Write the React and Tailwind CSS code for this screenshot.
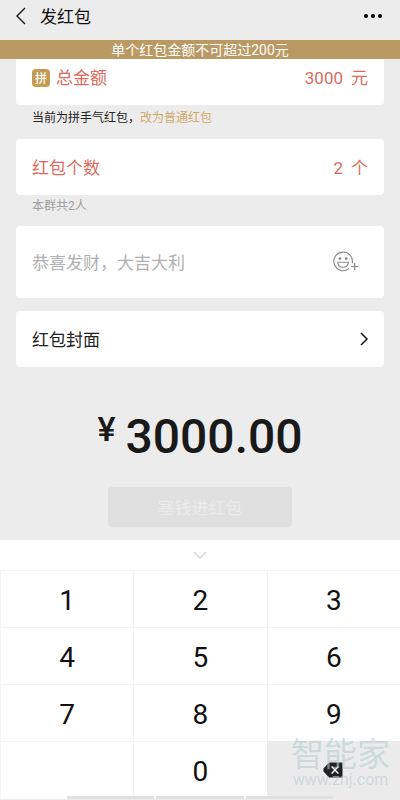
import { useState } from "react";

const CJK = "font-['Roboto','Noto_Sans_CJK_SC',sans-serif]";
const KEYS = ["1", "2", "3", "4", "5", "6", "7", "8", "9"];

const keyClass =
  "flex h-[57px] items-center justify-center border-t border-l border-[#f3f3f3] pt-1 text-[28px] leading-8 text-[#111]";

function BackIcon() {
  return (
    <svg width="12" height="18" viewBox="0 0 12 18" fill="none" stroke="#222" strokeWidth="1.5">
      <path d="M9 1 L1 9 L9 17" />
    </svg>
  );
}

function EmojiAddIcon() {
  return (
    <svg width="26" height="22" viewBox="0 0 26 22" fill="none" stroke="#888" strokeWidth="1.1">
      <path d="M16.2 17.4 A9.3 9.3 0 1 1 19.2 12.4" />
      <circle cx="7" cy="7.6" r="1.4" fill="#888" stroke="none" />
      <circle cx="13.2" cy="7.6" r="1.4" fill="#888" stroke="none" />
      <path d="M4.8 11.3 H15.4 C15.2 14.6 12.8 16.3 10.1 16.3 C7.4 16.3 5 14.6 4.8 11.3 Z" />
      <path d="M18 15.5 H25.4 M21.7 11.8 V19.2" strokeWidth="1.2" />
    </svg>
  );
}

function DeleteIcon() {
  return (
    <svg width="20" height="16" viewBox="0 0 20 16">
      <path d="M6 0.5 H19.5 V15.5 H6 L0.5 9.5 V6.5 Z" fill="#222" />
      <path d="M8.6 4.6 L15.4 11.4 M15.4 4.6 L8.6 11.4" stroke="#fff" strokeWidth="1.4" />
    </svg>
  );
}

function NumberRow({ id, label, unit, badge, value, onChange }) {
  return (
    <>
      <label htmlFor={id} className="flex shrink-0 items-center gap-[6px] text-[17px] leading-6 text-[#db6b5c]">
        {badge && (
          <span className="flex h-[18px] w-[18px] items-center justify-center rounded-sm bg-[#c39b52] pt-[2px] text-[12px] leading-4 font-medium text-white">
            {badge}
          </span>
        )}
        {label}
      </label>
      <div className="flex min-w-0 flex-1 items-center gap-2 text-[17px] leading-6 text-[#db6b5c]">
        <input
          id={id}
          inputMode="decimal"
          value={value}
          onChange={(e) => onChange(e.target.value)}
          className="min-w-0 flex-1 bg-transparent text-right outline-none"
        />
        <span>{unit}</span>
      </div>
    </>
  );
}

export default function App() {
  const [total, setTotal] = useState("3000");
  const [count, setCount] = useState("2");
  const [wish, setWish] = useState("");

  return (
    <div className={`min-h-screen overflow-hidden bg-[#ececec] ${CJK}`}>
      <header className="flex h-10 items-center justify-between px-4 pb-2">
        <div className="flex items-center gap-3">
          <button type="button" aria-label="返回">
            <BackIcon />
          </button>
          <h1 className="pt-[2px] text-[17px] leading-6 text-[#111]">发红包</h1>
        </div>
        <button type="button" aria-label="更多" className="flex gap-[3px] pr-[2px]">
          <span className="h-1 w-1 rounded-full bg-black" />
          <span className="h-1 w-1 rounded-full bg-black" />
          <span className="h-1 w-1 rounded-full bg-black" />
        </button>
      </header>

      <div className="h-[19px] bg-[#ba9963] pt-[2px] text-center text-[14px] leading-[17px] text-white">
        单个红包金额不可超过200元
      </div>

      <main className="px-4">
        <div className="flex h-[46px] items-center rounded-b bg-white px-4 pb-2">
          <NumberRow id="total" label="总金额" unit="元" badge="拼" value={total} onChange={setTotal} />
        </div>
        <p className="h-[34px] px-4 pt-1 text-[12px] leading-[19px] text-[#222]">
          当前为拼手气红包，
          <button type="button" className="text-[#d0aa6a]">
            改为普通红包
          </button>
        </p>

        <div className="flex h-14 items-center rounded bg-white px-4 pt-[2px]">
          <NumberRow id="count" label="红包个数" unit="个" value={count} onChange={setCount} />
        </div>
        <p className="h-[31px] px-4 pt-[2px] text-[12px] leading-[19px] text-[#a0a0a0]">本群共2人</p>

        <div className="flex h-[72px] items-center rounded bg-white pr-[25px] pl-4">
          <input
            aria-label="祝福语"
            value={wish}
            onChange={(e) => setWish(e.target.value)}
            placeholder="恭喜发财，大吉大利"
            className="min-w-0 flex-1 bg-transparent pt-[3px] text-[17px] outline-none placeholder:text-[#b0b0b0]"
          />
          <button type="button" aria-label="添加表情">
            <EmojiAddIcon />
          </button>
        </div>

        <button
          type="button"
          className="mt-[13px] flex h-14 w-full items-center justify-between rounded bg-white px-4 text-[17px] text-[#222]"
        >
          <span className="pt-[3px]">红包封面</span>
          <svg width="8" height="14" viewBox="0 0 8 14" fill="none" stroke="#111" strokeWidth="1.5">
            <path d="M1 1 L7 7 L1 13" />
          </svg>
        </button>

        <div className="mt-[42px] flex items-start justify-center gap-[10px] font-medium text-[#191919]">
          <span className="text-[34px] leading-[40px]">¥</span>
          <span className="text-[48px] leading-[56px]">{Number(total).toFixed(2)}</span>
        </div>

        <button
          type="button"
          disabled
          className="mx-auto mt-[22px] block h-10 w-1/2 rounded bg-[#e0e0e0] pt-[3px] text-[17px] text-[#ebebeb]"
        >
          塞钱进红包
        </button>
      </main>

      <section className="relative mt-[13px] bg-white">
        <button type="button" aria-label="收起键盘" className="flex h-[30px] w-full items-center justify-center">
          <svg width="14" height="8" viewBox="0 0 14 8" fill="none" stroke="#d6d6d6" strokeWidth="1.5">
            <path d="M1 1 L7 7 L13 1" />
          </svg>
        </button>
        <div className="grid grid-cols-3">
          {KEYS.map((key) => (
            <button key={key} type="button" className={keyClass}>
              {key}
            </button>
          ))}
          <span className="border-t border-l border-[#f3f3f3]" />
          <button type="button" className={keyClass}>
            0
          </button>
          <button type="button" aria-label="删除" className="flex h-[58px] items-center justify-center bg-[#ebebeb]">
            <DeleteIcon />
          </button>
        </div>
        <div className="pointer-events-none absolute right-[10px] bottom-[10px] text-center text-[#b4ced2]/60">
          <div className="text-[33px] leading-8">智能家</div>
          <div className="text-[16px] leading-[18px]">www.znj.com</div>
        </div>
        <div className="absolute bottom-0 left-1/6 flex h-[3px] w-2/3 gap-[2px]">
          <span className="flex-1 bg-[#e0e0e0]" />
          <span className="flex-1 bg-[#e0e0e0]" />
          <span className="flex-1 bg-[#e0e0e0]" />
        </div>
      </section>
    </div>
  );
}
